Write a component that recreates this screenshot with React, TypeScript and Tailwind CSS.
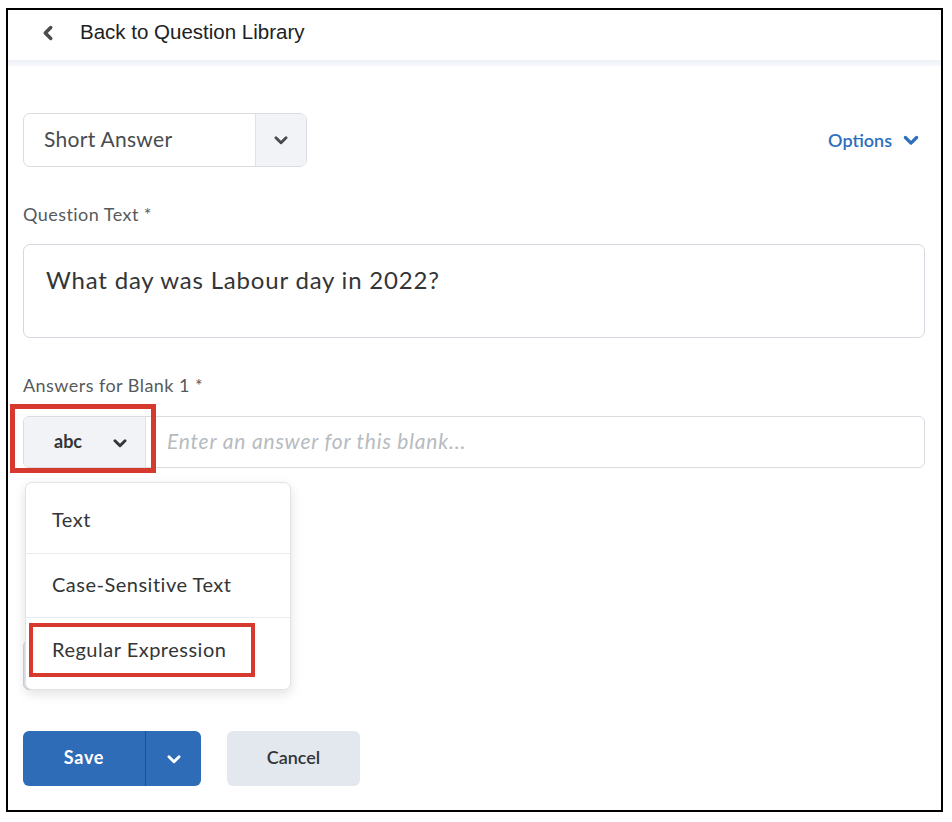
import { ChevronLeft } from 'lucide-react';

function ChevronDown({ className }: { className?: string }) {
  return (
    <svg viewBox="0 0 16 16" className={className} fill="none" aria-hidden="true">
      <path d="M3.5 6 L8 10.5 L12.5 6" stroke="currentColor" strokeWidth="2.6" strokeLinecap="round" strokeLinejoin="round" />
    </svg>
  );
}

const lato = { fontFamily: 'Lato, "Noto Sans", sans-serif' };

export default function App() {
  return (
    <div className="w-[952px] h-[822px] bg-white pt-[8px] pl-[6px]" style={lato}>
      <div className="w-[937px] h-[804px] border-2 border-black flex flex-col bg-white">
        {/* header */}
        <div className="h-[50px] flex items-center pl-[29px] pb-[5px]">
          <ChevronLeft className="w-[22px] h-[22px] text-[#494c4e]" strokeWidth={3.8} />
          <span
            className="ml-[21px] text-[20.5px] text-[#202122]"
            style={{ fontFamily: '"Liberation Sans", Arial, sans-serif' }}
          >
            Back to Question Library
          </span>
        </div>
        <div className="h-[6px] bg-gradient-to-b from-[#eef1f7] to-[#f6f8fb]" />

        <div className="pl-[15px] pr-[16px] flex flex-col">
          {/* type select + options */}
          <div className="mt-[47px] flex items-center justify-between">
            <div className="w-[284px] h-[54px] flex rounded-[7px] border border-[#d9dde2] overflow-hidden">
              <div className="flex-1 flex items-center pl-[20px] pb-[2px] text-[21px] tracking-[0.3px] text-[#494c4e]">Short Answer</div>
              <div className="w-[51px] flex items-center justify-center bg-[#f1f3f6] border-l border-[#dfe2e6]">
                <ChevronDown className="w-[18px] h-[18px] text-[#494c4e]" />
              </div>
            </div>
            <div className="flex items-center gap-[9px] pr-[4px] text-[18px] font-semibold text-[#2e6fbd]">
              <span>Options</span>
              <ChevronDown className="w-[20px] h-[20px]" />
            </div>
          </div>

          <div className="mt-[36px] text-[18px] leading-[22px] tracking-[0.45px] text-[#565a5c]">Question Text *</div>
          <div className="mt-[19px] h-[94px] rounded-[7px] border border-[#d3d8de] px-[22px] pt-[17px] text-[24px] tracking-[0.8px] text-[#333537]">
            What day was Labour day in 2022?
          </div>

          <div className="mt-[36px] text-[18px] leading-[22px] tracking-[0.45px] text-[#565a5c]">Answers for Blank 1 *</div>
          <div className="mt-[20px] relative h-[52px] flex rounded-[6px] border border-[#d9dde2]">
            <div className="w-[122px] flex items-center bg-[#f1f3f6] border-r border-[#dfe2e6] rounded-l-[6px] pl-[30px] pb-[2px] text-[18px] font-bold text-[#333537]">
              <span>abc</span>
              <ChevronDown className="ml-[29px] mt-[4px] w-[18px] h-[18px] text-[#333537]" />
            </div>
            <div className="flex-1 flex items-center pl-[21px] pb-[2px] text-[21px] tracking-[0.8px] italic text-[#b6bbc0]">
              Enter an answer for this blank...
            </div>
            <div className="absolute left-[-14px] top-[-13px] w-[146px] h-[69px] border-[5px] border-[#d63a2e]" />
          </div>

          {/* menu area */}
          <div className="relative h-[263px]">
            <div className="absolute left-0 top-[172px] w-[98px] h-[50px] rounded-[6px] bg-[#e3e8ef] border border-[#cfd5dc]" />
            <div className="absolute left-[2px] top-[14px] w-[266px] h-[208px] bg-white rounded-[7px] border border-[#dfe3e8] shadow-[0_4px_12px_rgba(0,0,0,0.12)] py-[6px] flex flex-col">
              <div className="h-[65px] flex items-center pl-[26px] pb-[4px] text-[20px] tracking-[0.5px] text-[#333537] border-b border-[#e8ebef]">Text</div>
              <div className="h-[65px] flex items-center pl-[26px] pb-[4px] text-[20px] tracking-[0.5px] text-[#333537] border-b border-[#e8ebef]">Case-Sensitive Text</div>
              <div className="relative h-[65px] flex items-center pl-[26px] pb-[4px] text-[20px] tracking-[0.5px] text-[#333537]">
                Regular Expression
                <div className="absolute left-[3px] top-[5px] w-[226px] h-[54px] border-[4px] border-[#d63a2e]" />
              </div>
            </div>
          </div>

          {/* buttons */}
          <div className="flex items-center gap-[26px]">
            <div className="w-[178px] h-[55px] flex rounded-[6px] bg-[#2f6cb7] text-white overflow-hidden">
              <div className="w-[123px] flex items-center justify-center pb-[2px] text-[18px] tracking-[0.7px] font-bold border-r border-[#1f4f8c]">Save</div>
              <div className="flex-1 flex items-center justify-center">
                <ChevronDown className="w-[18px] h-[18px]" />
              </div>
            </div>
            <div className="w-[133px] h-[55px] flex items-center justify-center pb-[2px] rounded-[6px] bg-[#e3e8ef] text-[18px] font-semibold text-[#333537]">
              Cancel
            </div>
          </div>
        </div>
      </div>
    </div>
  );
}
